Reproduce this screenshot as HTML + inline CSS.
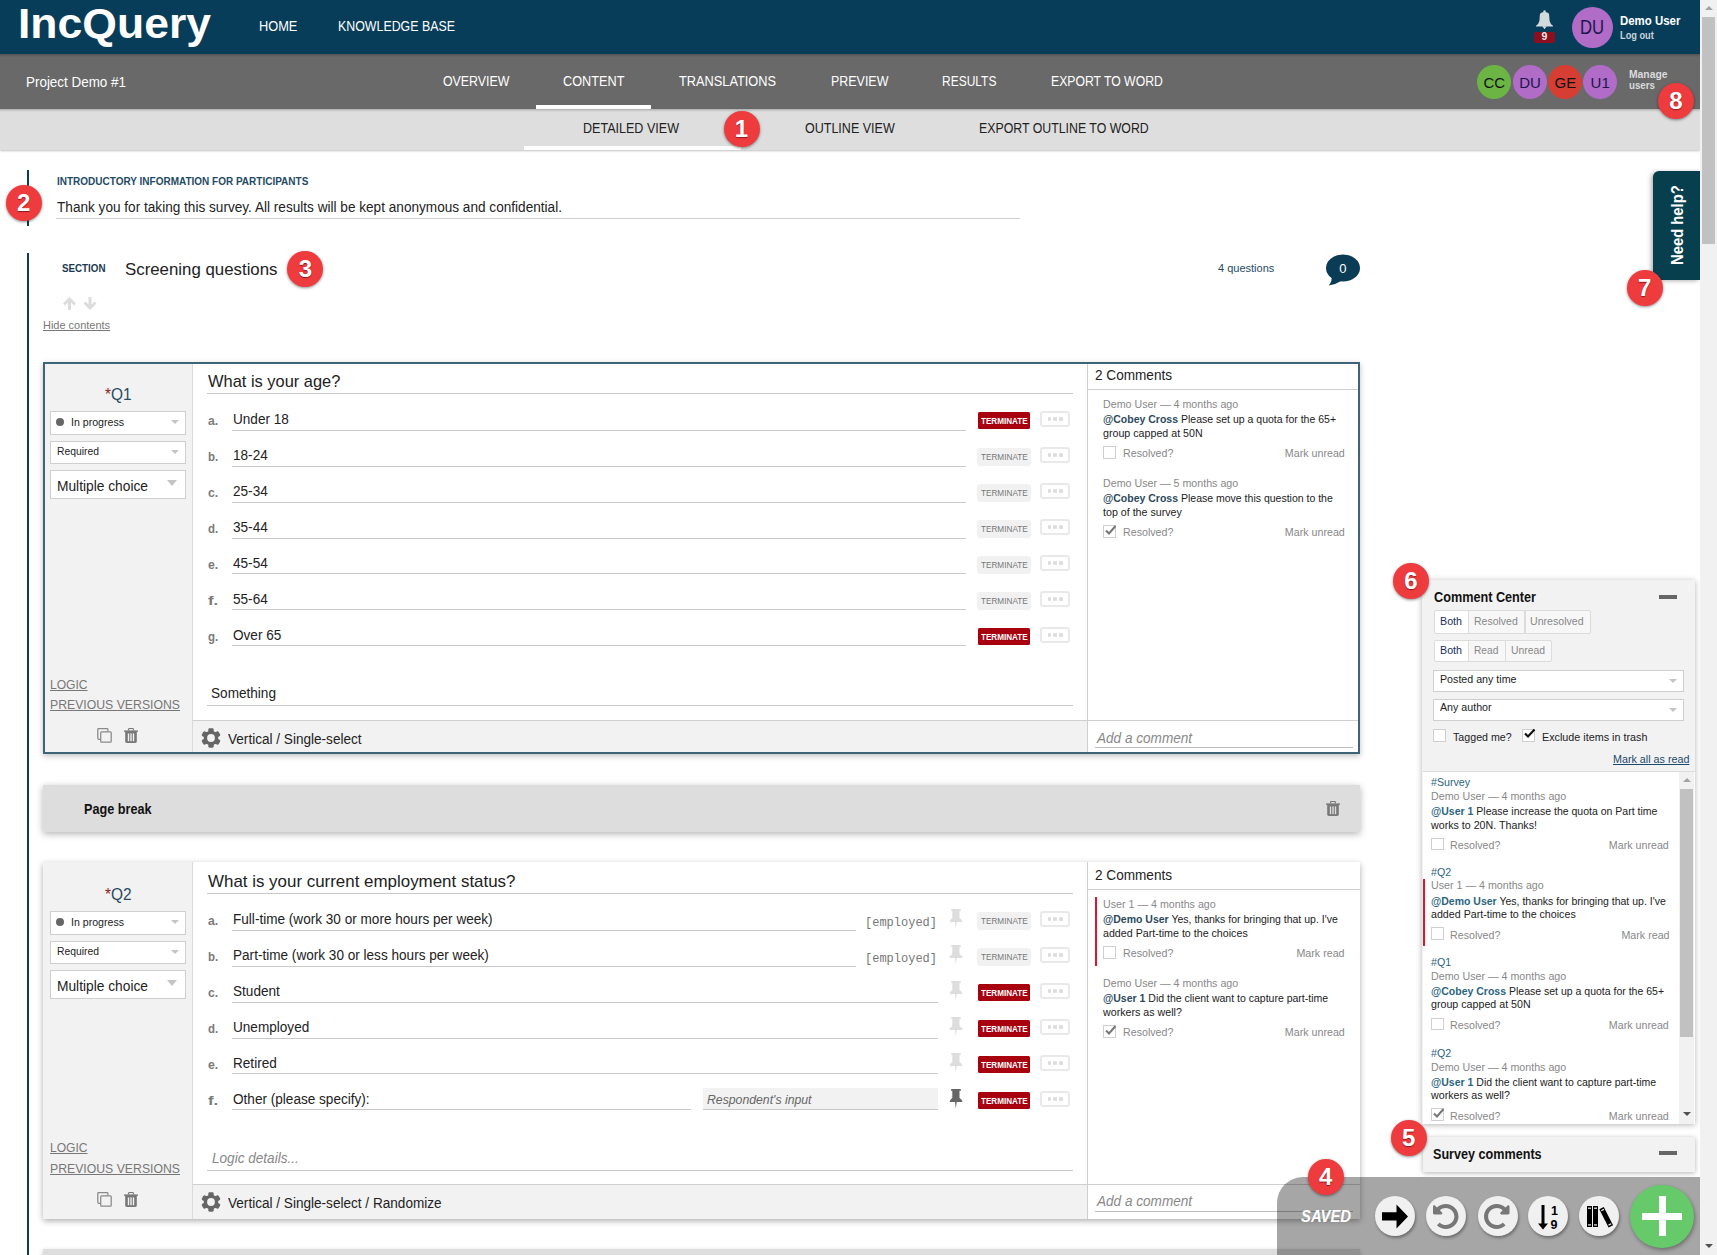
<!DOCTYPE html><html><head><meta charset="utf-8"><style>*{box-sizing:border-box;margin:0;padding:0}
html,body{width:1717px;height:1255px;overflow:hidden;background:#fff;font-family:"Liberation Sans",sans-serif}
.t{position:absolute;white-space:nowrap;line-height:1;transform-origin:0 0}
.r{position:absolute}
.abs{position:absolute}
.badge{position:absolute;width:36px;height:36px;border-radius:50%;background:#ee3b3e;color:#fff;font-size:24px;font-weight:bold;line-height:35.5px;text-align:center;text-shadow:0 1px 1px rgba(60,0,0,.55);box-shadow:0 1px 3px rgba(0,0,0,.45);font-family:"Liberation Sans",sans-serif}
.av{position:absolute;border-radius:50%;text-align:center}
.sel{position:absolute;background:#fff;border:1px solid #cfcfcf}
.arr{position:absolute;width:0;height:0;border-style:solid;border-width:4px 4px 0 4px;border-color:#c4c4c4 transparent transparent transparent;}
.ul{position:absolute;height:1px;background:#c9c9c9}
.term{position:absolute;width:52px;height:17px;border-radius:2px}
.dots{position:absolute;width:30px;height:15.5px;border:2px solid #e9e9e9;border-radius:3px}
.dots i{position:absolute;top:4.2px;width:3.6px;height:3.6px;border-radius:1px;background:#dedede}
.cb{position:absolute;width:13px;height:13px;border:1px solid #cfcfcf;background:#fff}
.tb{position:absolute;width:40px;height:40px;border-radius:50%;background:#f0f0f0;box-shadow:1px 2px 3px rgba(0,0,0,.35)}
</style></head><body><div class="r" style="left:0px;top:0px;width:1700px;height:54px;background:#083d59"></div>
<div id="t1" class="t" style="transform:scaleX(1.0600);left:17.50px;top:2.95px;font-size:42px;color:#fff;font-weight:bold">IncQuery</div>
<div id="t2" class="t" style="transform:scaleX(0.9143);left:258.90px;top:18.85px;font-size:14px;color:#fff;">HOME</div>
<div id="t3" class="t" style="transform:scaleX(0.8846);left:338.30px;top:18.85px;font-size:14px;color:#fff;">KNOWLEDGE BASE</div>
<svg class="abs" style="left:1535px;top:10px" width="19" height="20" viewBox="0 0 19 20"><g fill="#d3dade"><circle cx="9.5" cy="1.4" r="1.2"/><path d="M4.9 4.4 Q5.2 2.2 9.5 2.0 Q13.8 2.2 14.1 4.4 L14.6 11 Q15.2 13.8 18 15.8 V16.4 H1 V15.8 Q3.8 13.8 4.4 11 Z"/><path d="M7.2 16.3 H11.8 L9.5 19.2 Z"/></g></svg>
<div class="r" style="left:1534px;top:32px;width:21px;height:11px;background:#8c0f1f;border-radius:2px"></div>
<div id="t4" class="t" style="transform:scaleX(0.9700);left:1544.50px;top:31.41px;font-size:10.5px;color:#e8e8e8;font-weight:bold;transform:translateX(-50%)">9</div>
<div class="av" style="left:1572px;top:7px;width:41px;height:41px;background:#b06cc6"></div>
<div id="t5" class="t" style="transform:scaleX(0.8555);left:1580.20px;top:17.99px;font-size:19.5px;color:#1b1650;">DU</div>
<div id="t6" class="t" style="transform:scaleX(0.9533);left:1619.60px;top:14.64px;font-size:12px;color:#fff;font-weight:bold">Demo User</div>
<div id="t7" class="t" style="transform:scaleX(0.9221);left:1620.00px;top:30.93px;font-size:10px;color:#c9d3d9;font-weight:bold">Log out</div>
<div class="r" style="left:0px;top:54px;width:1700px;height:55px;background:#696969"></div>
<div class="r" style="left:0px;top:54px;width:1700px;height:3px;background:linear-gradient(rgba(0,0,0,.22),rgba(0,0,0,0))"></div>
<div id="t8" class="t" style="transform:scaleX(0.9259);left:26.20px;top:74.73px;font-size:14.5px;color:#fff;">Project Demo #1</div>
<div id="t9" class="t" style="transform:scaleX(0.8829);left:442.90px;top:74.15px;font-size:14px;color:#fff;">OVERVIEW</div>
<div id="t10" class="t" style="transform:scaleX(0.9073);left:563.20px;top:74.15px;font-size:14px;color:#fff;">CONTENT</div>
<div id="t11" class="t" style="transform:scaleX(0.9124);left:679.40px;top:74.15px;font-size:14px;color:#fff;">TRANSLATIONS</div>
<div id="t12" class="t" style="transform:scaleX(0.8888);left:830.50px;top:74.15px;font-size:14px;color:#fff;">PREVIEW</div>
<div id="t13" class="t" style="transform:scaleX(0.8561);left:942.10px;top:74.15px;font-size:14px;color:#fff;">RESULTS</div>
<div id="t14" class="t" style="transform:scaleX(0.8727);left:1051.20px;top:74.15px;font-size:14px;color:#fff;">EXPORT TO WORD</div>
<div class="r" style="left:536px;top:105px;width:115px;height:4px;background:#fff"></div>
<div class="av" style="left:1477px;top:65px;width:34px;height:34px;background:#6cb544"></div>
<div class="av" style="left:1513px;top:65px;width:34px;height:34px;background:#b06cc6"></div>
<div class="av" style="left:1548.4px;top:65px;width:34px;height:34px;background:#d63d33"></div>
<div class="av" style="left:1583.2px;top:65px;width:34px;height:34px;background:#b06cc6"></div>
<div id="t15" class="t" style="transform:scaleX(0.9700);left:1494.30px;top:75.40px;font-size:15px;color:#111;transform:translateX(-50%)">CC</div>
<div id="t16" class="t" style="transform:scaleX(0.9700);left:1530.00px;top:75.40px;font-size:15px;color:#1b1650;transform:translateX(-50%)">DU</div>
<div id="t17" class="t" style="transform:scaleX(0.9700);left:1565.40px;top:75.40px;font-size:15px;color:#111;transform:translateX(-50%)">GE</div>
<div id="t18" class="t" style="transform:scaleX(0.9700);left:1600.20px;top:75.40px;font-size:15px;color:#1b1650;transform:translateX(-50%)">U1</div>
<div id="t19" class="t" style="transform:scaleX(0.9397);left:1628.50px;top:69.39px;font-size:11px;color:#dcdcdc;font-weight:bold">Manage</div>
<div id="t20" class="t" style="transform:scaleX(0.8856);left:1628.50px;top:79.99px;font-size:11px;color:#dcdcdc;font-weight:bold">users</div>
<div class="r" style="left:0px;top:109px;width:1700px;height:41px;background:#dedede;box-shadow:0 1px 2px rgba(0,0,0,.25)"></div>
<div class="r" style="left:0px;top:109px;width:1700px;height:3px;background:linear-gradient(rgba(0,0,0,.2),rgba(0,0,0,0))"></div>
<div id="t21" class="t" style="transform:scaleX(0.8964);left:583.40px;top:121.45px;font-size:14px;color:#222;">DETAILED VIEW</div>
<div id="t22" class="t" style="transform:scaleX(0.8938);left:805.00px;top:121.45px;font-size:14px;color:#222;">OUTLINE VIEW</div>
<div id="t23" class="t" style="transform:scaleX(0.8808);left:979.30px;top:121.45px;font-size:14px;color:#222;">EXPORT OUTLINE TO WORD</div>
<div class="r" style="left:524px;top:146px;width:217px;height:4px;background:#fff"></div>
<div class="r" style="left:27px;top:170px;width:2px;height:56px;background:#0b3c5d"></div>
<div id="t24" class="t" style="transform:scaleX(0.9085);left:56.70px;top:176.19px;font-size:11px;color:#1f4b64;font-weight:bold">INTRODUCTORY INFORMATION FOR PARTICIPANTS</div>
<div id="t25" class="t" style="transform:scaleX(0.9719);left:57.00px;top:200.45px;font-size:14px;color:#222;">Thank you for taking this survey. All results will be kept anonymous and confidential.</div>
<div class="r" style="left:56px;top:218px;width:964px;height:1px;background:#cfcfcf"></div>
<div class="r" style="left:27px;top:253px;width:2px;height:1002px;background:#0b3c5d"></div>
<div id="t26" class="t" style="transform:scaleX(0.8895);left:61.90px;top:262.99px;font-size:11px;color:#1b3a50;font-weight:bold">SECTION</div>
<div id="t27" class="t" style="transform:scaleX(0.9900);left:124.70px;top:261.11px;font-size:17px;color:#222;">Screening questions</div>
<div id="t28" class="t" style="transform:scaleX(1.0006);left:1218.00px;top:263.19px;font-size:11px;color:#1f4b64;">4 questions</div>
<svg class="abs" style="left:1325px;top:254px" width="36" height="33" viewBox="0 0 36 33"><ellipse cx="18" cy="14" rx="17" ry="13.6" fill="#0b3c56"/><path d="M6.5 21 Q7.5 27.5 3.8 31.4 Q11 30.5 17 26.5 Z" fill="#0b3c56"/></svg>
<div id="t29" class="t" style="left:1339.30px;top:261.50px;font-size:13px;color:#fff;">0</div>
<svg class="abs" style="left:62px;top:296px" width="36" height="15" viewBox="0 0 36 15"><path d="M7.5 1 L1 7.5 L3 9.5 L6 6.5 V14 H9 V6.5 L12 9.5 L14 7.5 Z" fill="#dcdcdc"/><path d="M28 14 L21.5 7.5 L23.5 5.5 L26.5 8.5 V1 H29.5 V8.5 L32.5 5.5 L34.5 7.5 Z" fill="#dcdcdc"/></svg>
<div id="t30" class="t" style="transform:scaleX(0.9975);left:42.90px;top:320.19px;font-size:11px;color:#777;text-decoration:underline">Hide contents</div>
<div class="abs" style="left:43px;top:362px;width:1317px;height:392px;border:2px solid #3f6377;box-shadow:0 2px 6px rgba(0,0,0,.25);background:#fff"></div>
<div class="r" style="left:45px;top:364px;width:147px;height:388px;background:#f2f2f2"></div>
<div class="r" style="left:192px;top:364px;width:1px;height:388px;background:#dadada"></div>
<div class="r" style="left:1087px;top:364px;width:1px;height:388px;background:#cfcfcf"></div>
<div class="r" style="left:193px;top:720px;width:894px;height:32px;background:#f2f2f2"></div>
<div class="r" style="left:193px;top:720px;width:1165px;height:1px;background:#cfcfcf"></div>
<div id="t31" class="t" style="transform:scaleX(0.9645);left:104.60px;top:387.16px;font-size:16px;color:#2b4a5f;"><span style="color:#8b1a2a">*</span>Q1</div>
<div class="sel" style="left:50px;top:411px;width:136px;height:24px"></div>
<div class="abs" style="left:56px;top:418px;width:8px;height:8px;border-radius:50%;background:#666"></div>
<div id="t32" class="t" style="transform:scaleX(0.9631);left:70.50px;top:417.49px;font-size:11px;color:#222;">In progress</div>
<div class="arr" style="left:171px;top:420px"></div>
<div class="sel" style="left:50px;top:441px;width:136px;height:23px"></div>
<div id="t33" class="t" style="transform:scaleX(0.9408);left:56.50px;top:446.19px;font-size:11px;color:#222;">Required</div>
<div class="arr" style="left:171px;top:450px"></div>
<div class="sel" style="left:50px;top:470px;width:136px;height:29px"></div>
<div id="t34" class="t" style="transform:scaleX(0.9826);left:57.00px;top:478.55px;font-size:14px;color:#222;">Multiple choice</div>
<div class="arr" style="left:167px;top:480px;border-width:6px 5.5px 0 5.5px"></div>
<div id="t35" class="t" style="transform:scaleX(0.9266);left:49.90px;top:677.50px;font-size:13px;color:#777;text-decoration:underline">LOGIC</div>
<div id="t36" class="t" style="transform:scaleX(0.9421);left:49.90px;top:697.60px;font-size:13px;color:#777;text-decoration:underline">PREVIOUS VERSIONS</div>
<svg class="abs" style="left:97px;top:728px" width="15" height="15" viewBox="0 0 15 15"><path d="M3.6 11.3 H1.6 Q0.8 11.3 0.8 10.5 V1.4 Q0.8 0.7 1.6 0.7 H10.1 Q10.9 0.7 10.9 1.4 V3.6" fill="none" stroke="#8a8a8a" stroke-width="1.25"/><rect x="3.7" y="3.9" width="10.5" height="10.3" rx="0.9" fill="none" stroke="#8a8a8a" stroke-width="1.25"/></svg>
<svg class="abs" style="left:124px;top:728px" width="14" height="16" viewBox="0 0 14 16"><path d="M4.6 2.6 V1.3 Q4.6 0.5 5.4 0.5 H8.6 Q9.4 0.5 9.4 1.3 V2.6" fill="none" stroke="#777" stroke-width="1.1"/><rect x="0.1" y="2.4" width="13.8" height="1.5" fill="#777"/><path d="M1.2 3.5 H12.8 V13.2 Q12.8 14.9 11.1 14.9 H2.9 Q1.2 14.9 1.2 13.2 Z" fill="#777"/><rect x="3.8" y="5.4" width="1.4" height="7.8" fill="#f2f2f2"/><rect x="6.3" y="5.4" width="1.4" height="7.8" fill="#f2f2f2"/><rect x="8.8" y="5.4" width="1.4" height="7.8" fill="#f2f2f2"/></svg>
<div id="t37" class="t" style="transform:scaleX(0.9663);left:207.60px;top:372.91px;font-size:17px;color:#222;">What is your age?</div>
<div class="r" style="left:207px;top:393px;width:866px;height:1px;background:#c9c9c9"></div>
<div id="t38" class="t" style="transform:scaleX(0.8992);left:208.00px;top:413.79px;font-size:13.6px;color:#7a7a7a;font-weight:bold">a.</div>
<div id="t39" class="t" style="transform:scaleX(0.9700);left:232.60px;top:412.45px;font-size:14px;color:#222;">Under 18</div>
<div class="r" style="left:232px;top:430px;width:734px;height:1px;background:#c9c9c9"></div>
<div class="term" style="left:978px;top:412.0px;background:#a8000f;border-radius:1.5px"></div>
<div id="t40" class="t" style="transform:scaleX(0.8535);left:981.00px;top:415.66px;font-size:9.5px;color:#fff;font-weight:bold">TERMINATE</div>
<div class="dots" style="left:1040px;top:411.2px"><i style="left:5.5px"></i><i style="left:11.2px"></i><i style="left:17px"></i></div>
<div id="t41" class="t" style="transform:scaleX(0.8434);left:208.00px;top:449.79px;font-size:13.6px;color:#7a7a7a;font-weight:bold">b.</div>
<div id="t42" class="t" style="transform:scaleX(0.9700);left:232.60px;top:448.45px;font-size:14px;color:#222;">18-24</div>
<div class="r" style="left:232px;top:466px;width:734px;height:1px;background:#c9c9c9"></div>
<div class="term" style="left:977px;top:448.0px;width:54px;height:18px;background:#f1f1f1;border-radius:3px"></div>
<div id="t43" class="t" style="transform:scaleX(0.8618);left:981.00px;top:452.06px;font-size:9.5px;color:#777;">TERMINATE</div>
<div class="dots" style="left:1040px;top:447.2px"><i style="left:5.5px"></i><i style="left:11.2px"></i><i style="left:17px"></i></div>
<div id="t44" class="t" style="transform:scaleX(0.8992);left:208.00px;top:485.79px;font-size:13.6px;color:#7a7a7a;font-weight:bold">c.</div>
<div id="t45" class="t" style="transform:scaleX(0.9700);left:232.60px;top:484.45px;font-size:14px;color:#222;">25-34</div>
<div class="r" style="left:232px;top:502px;width:734px;height:1px;background:#c9c9c9"></div>
<div class="term" style="left:977px;top:484.0px;width:54px;height:18px;background:#f1f1f1;border-radius:3px"></div>
<div id="t46" class="t" style="transform:scaleX(0.8618);left:981.00px;top:488.06px;font-size:9.5px;color:#777;">TERMINATE</div>
<div class="dots" style="left:1040px;top:483.2px"><i style="left:5.5px"></i><i style="left:11.2px"></i><i style="left:17px"></i></div>
<div id="t47" class="t" style="transform:scaleX(0.8434);left:208.00px;top:521.79px;font-size:13.6px;color:#7a7a7a;font-weight:bold">d.</div>
<div id="t48" class="t" style="transform:scaleX(0.9700);left:232.60px;top:520.45px;font-size:14px;color:#222;">35-44</div>
<div class="r" style="left:232px;top:538px;width:734px;height:1px;background:#c9c9c9"></div>
<div class="term" style="left:977px;top:520.0px;width:54px;height:18px;background:#f1f1f1;border-radius:3px"></div>
<div id="t49" class="t" style="transform:scaleX(0.8618);left:981.00px;top:524.06px;font-size:9.5px;color:#777;">TERMINATE</div>
<div class="dots" style="left:1040px;top:519.1999999999999px"><i style="left:5.5px"></i><i style="left:11.2px"></i><i style="left:17px"></i></div>
<div id="t50" class="t" style="transform:scaleX(0.8992);left:208.00px;top:557.79px;font-size:13.6px;color:#7a7a7a;font-weight:bold">e.</div>
<div id="t51" class="t" style="transform:scaleX(0.9700);left:232.60px;top:556.45px;font-size:14px;color:#222;">45-54</div>
<div class="r" style="left:232px;top:573px;width:734px;height:1px;background:#c9c9c9"></div>
<div class="term" style="left:977px;top:556.0px;width:54px;height:18px;background:#f1f1f1;border-radius:3px"></div>
<div id="t52" class="t" style="transform:scaleX(0.8618);left:981.00px;top:560.06px;font-size:9.5px;color:#777;">TERMINATE</div>
<div class="dots" style="left:1040px;top:555.1999999999999px"><i style="left:5.5px"></i><i style="left:11.2px"></i><i style="left:17px"></i></div>
<div id="t53" class="t" style="transform:scaleX(1.2271);left:208.00px;top:593.79px;font-size:13.6px;color:#7a7a7a;font-weight:bold">f.</div>
<div id="t54" class="t" style="transform:scaleX(0.9700);left:232.60px;top:592.45px;font-size:14px;color:#222;">55-64</div>
<div class="r" style="left:232px;top:609px;width:734px;height:1px;background:#c9c9c9"></div>
<div class="term" style="left:977px;top:592.0px;width:54px;height:18px;background:#f1f1f1;border-radius:3px"></div>
<div id="t55" class="t" style="transform:scaleX(0.8618);left:981.00px;top:596.06px;font-size:9.5px;color:#777;">TERMINATE</div>
<div class="dots" style="left:1040px;top:591.1999999999999px"><i style="left:5.5px"></i><i style="left:11.2px"></i><i style="left:17px"></i></div>
<div id="t56" class="t" style="transform:scaleX(0.8434);left:208.00px;top:629.79px;font-size:13.6px;color:#7a7a7a;font-weight:bold">g.</div>
<div id="t57" class="t" style="transform:scaleX(0.9700);left:232.60px;top:628.45px;font-size:14px;color:#222;">Over 65</div>
<div class="r" style="left:232px;top:645px;width:734px;height:1px;background:#c9c9c9"></div>
<div class="term" style="left:978px;top:628.0px;background:#a8000f;border-radius:1.5px"></div>
<div id="t58" class="t" style="transform:scaleX(0.8535);left:981.00px;top:631.66px;font-size:9.5px;color:#fff;font-weight:bold">TERMINATE</div>
<div class="dots" style="left:1040px;top:627.1999999999999px"><i style="left:5.5px"></i><i style="left:11.2px"></i><i style="left:17px"></i></div>
<div id="t59" class="t" style="transform:scaleX(0.9711);left:210.60px;top:685.65px;font-size:14px;color:#222;">Something</div>
<div class="r" style="left:207px;top:705px;width:866px;height:1px;background:#c9c9c9"></div>
<svg class="abs" style="left:201px;top:728px" width="20" height="20" viewBox="0 0 20 20"><g transform="translate(10 10)" fill="#666"><circle r="7.3"/><rect x="-2.7" y="-9.7" width="5.4" height="5" rx="1.4" transform="rotate(0)"/><rect x="-2.7" y="-9.7" width="5.4" height="5" rx="1.4" transform="rotate(60)"/><rect x="-2.7" y="-9.7" width="5.4" height="5" rx="1.4" transform="rotate(120)"/><rect x="-2.7" y="-9.7" width="5.4" height="5" rx="1.4" transform="rotate(180)"/><rect x="-2.7" y="-9.7" width="5.4" height="5" rx="1.4" transform="rotate(240)"/><rect x="-2.7" y="-9.7" width="5.4" height="5" rx="1.4" transform="rotate(300)"/><circle r="3.9" fill="#f2f2f2"/></g></svg>
<div id="t60" class="t" style="transform:scaleX(0.9700);left:228.00px;top:731.65px;font-size:14px;color:#222;">Vertical / Single-select</div>
<div id="t61" class="t" style="transform:scaleX(0.9703);left:1095.10px;top:368.25px;font-size:14px;color:#222;">2 Comments</div>
<div class="r" style="left:1088px;top:389px;width:1270px;height:0px;"></div>
<div class="r" style="left:1088px;top:389px;width:270px;height:1px;background:#cfcfcf"></div>
<div id="t62" class="t" style="transform:scaleX(0.9700);left:1103.30px;top:399.19px;font-size:11px;color:#888;">Demo User — 4 months ago</div>
<div id="t63" class="t" style="transform:scaleX(0.9550);left:1103.30px;top:414.39px;font-size:11px;color:#222;"><b style="color:#2b4a5e">@Cobey Cross</b> Please set up a quota for the 65+</div>
<div id="t64" class="t" style="transform:scaleX(0.9700);left:1103.30px;top:427.99px;font-size:11px;color:#222;">group capped at 50N</div>
<div class="cb" style="left:1103.3px;top:446.0px;width:13px;height:12.5px"></div>
<div id="t65" class="t" style="transform:scaleX(0.9700);left:1122.50px;top:448.29px;font-size:11px;color:#888;">Resolved?</div>
<div id="t66" class="t" style="transform:scaleX(0.9700);transform-origin:100% 0;right:372.00px;top:448.29px;font-size:11px;color:#888;">Mark unread</div>
<div id="t67" class="t" style="transform:scaleX(0.9700);left:1103.30px;top:478.19px;font-size:11px;color:#888;">Demo User — 5 months ago</div>
<div id="t68" class="t" style="transform:scaleX(0.9550);left:1103.30px;top:493.39px;font-size:11px;color:#222;"><b style="color:#2b4a5e">@Cobey Cross</b> Please move this question to the</div>
<div id="t69" class="t" style="transform:scaleX(0.9700);left:1103.30px;top:506.99px;font-size:11px;color:#222;">top of the survey</div>
<div class="cb" style="left:1103.3px;top:525.0px;width:13px;height:12.5px"></div>
<svg class="abs" style="left:1104.3px;top:524.0px" width="13" height="13" viewBox="0 0 13 13"><path d="M2 6.5 L5 9.5 L11.5 2" fill="none" stroke="#777" stroke-width="2"/></svg>
<div id="t70" class="t" style="transform:scaleX(0.9700);left:1122.50px;top:527.29px;font-size:11px;color:#888;">Resolved?</div>
<div id="t71" class="t" style="transform:scaleX(0.9700);transform-origin:100% 0;right:372.00px;top:527.29px;font-size:11px;color:#888;">Mark unread</div>
<div id="t72" class="t" style="transform:scaleX(0.9700);left:1097.00px;top:730.65px;font-size:14px;color:#888;font-style:italic">Add a comment</div>
<div class="r" style="left:1095px;top:747px;width:258px;height:1px;background:#bdbdbd"></div>
<div class="r" style="left:43px;top:785px;width:1317px;height:47px;background:#dddddd;box-shadow:0 2px 7px rgba(0,0,0,.3)"></div>
<div id="t73" class="t" style="transform:scaleX(0.9034);left:83.80px;top:801.55px;font-size:14px;color:#111;font-weight:bold">Page break</div>
<svg class="abs" style="left:1326px;top:801px" width="14" height="16" viewBox="0 0 14 16"><path d="M4.6 2.6 V1.3 Q4.6 0.5 5.4 0.5 H8.6 Q9.4 0.5 9.4 1.3 V2.6" fill="none" stroke="#777" stroke-width="1.1"/><rect x="0.1" y="2.4" width="13.8" height="1.5" fill="#777"/><path d="M1.2 3.5 H12.8 V13.2 Q12.8 14.9 11.1 14.9 H2.9 Q1.2 14.9 1.2 13.2 Z" fill="#777"/><rect x="3.8" y="5.4" width="1.4" height="7.8" fill="#dddddd"/><rect x="6.3" y="5.4" width="1.4" height="7.8" fill="#dddddd"/><rect x="8.8" y="5.4" width="1.4" height="7.8" fill="#dddddd"/></svg>
<div class="abs" style="left:43px;top:862px;width:1317px;height:357px;box-shadow:0 2px 6px rgba(0,0,0,.32);background:#fff"></div>
<div class="r" style="left:43px;top:862px;width:149px;height:357px;background:#f2f2f2"></div>
<div class="r" style="left:192px;top:862px;width:1px;height:357px;background:#dadada"></div>
<div class="r" style="left:1087px;top:862px;width:1px;height:357px;background:#cfcfcf"></div>
<div class="r" style="left:193px;top:1184px;width:894px;height:35px;background:#f2f2f2"></div>
<div class="r" style="left:193px;top:1184px;width:1167px;height:1px;background:#cfcfcf"></div>
<div id="t74" class="t" style="transform:scaleX(0.9645);left:104.60px;top:887.16px;font-size:16px;color:#2b4a5f;"><span style="color:#8b1a2a">*</span>Q2</div>
<div class="sel" style="left:50px;top:911px;width:136px;height:24px"></div>
<div class="abs" style="left:56px;top:918px;width:8px;height:8px;border-radius:50%;background:#666"></div>
<div id="t75" class="t" style="transform:scaleX(0.9631);left:70.50px;top:917.49px;font-size:11px;color:#222;">In progress</div>
<div class="arr" style="left:171px;top:920px"></div>
<div class="sel" style="left:50px;top:941px;width:136px;height:23px"></div>
<div id="t76" class="t" style="transform:scaleX(0.9408);left:56.50px;top:946.19px;font-size:11px;color:#222;">Required</div>
<div class="arr" style="left:171px;top:950px"></div>
<div class="sel" style="left:50px;top:970px;width:136px;height:29px"></div>
<div id="t77" class="t" style="transform:scaleX(0.9826);left:57.00px;top:978.55px;font-size:14px;color:#222;">Multiple choice</div>
<div class="arr" style="left:167px;top:980px;border-width:6px 5.5px 0 5.5px"></div>
<div id="t78" class="t" style="transform:scaleX(0.9266);left:49.90px;top:1141.40px;font-size:13px;color:#777;text-decoration:underline">LOGIC</div>
<div id="t79" class="t" style="transform:scaleX(0.9421);left:49.90px;top:1161.50px;font-size:13px;color:#777;text-decoration:underline">PREVIOUS VERSIONS</div>
<svg class="abs" style="left:97px;top:1192px" width="15" height="15" viewBox="0 0 15 15"><path d="M3.6 11.3 H1.6 Q0.8 11.3 0.8 10.5 V1.4 Q0.8 0.7 1.6 0.7 H10.1 Q10.9 0.7 10.9 1.4 V3.6" fill="none" stroke="#8a8a8a" stroke-width="1.25"/><rect x="3.7" y="3.9" width="10.5" height="10.3" rx="0.9" fill="none" stroke="#8a8a8a" stroke-width="1.25"/></svg>
<svg class="abs" style="left:124px;top:1192px" width="14" height="16" viewBox="0 0 14 16"><path d="M4.6 2.6 V1.3 Q4.6 0.5 5.4 0.5 H8.6 Q9.4 0.5 9.4 1.3 V2.6" fill="none" stroke="#777" stroke-width="1.1"/><rect x="0.1" y="2.4" width="13.8" height="1.5" fill="#777"/><path d="M1.2 3.5 H12.8 V13.2 Q12.8 14.9 11.1 14.9 H2.9 Q1.2 14.9 1.2 13.2 Z" fill="#777"/><rect x="3.8" y="5.4" width="1.4" height="7.8" fill="#f2f2f2"/><rect x="6.3" y="5.4" width="1.4" height="7.8" fill="#f2f2f2"/><rect x="8.8" y="5.4" width="1.4" height="7.8" fill="#f2f2f2"/></svg>
<div id="t80" class="t" style="transform:scaleX(0.9952);left:207.60px;top:872.91px;font-size:17px;color:#222;">What is your current employment status?</div>
<div class="r" style="left:207px;top:893px;width:866px;height:1px;background:#c9c9c9"></div>
<div id="t81" class="t" style="transform:scaleX(0.8992);left:208.00px;top:913.79px;font-size:13.6px;color:#7a7a7a;font-weight:bold">a.</div>
<div id="t82" class="t" style="transform:scaleX(0.9700);left:232.60px;top:912.45px;font-size:14px;color:#222;">Full-time (work 30 or more hours per week)</div>
<div class="r" style="left:232px;top:930px;width:624px;height:1px;background:#c9c9c9"></div>
<div id="t83" class="t" style="transform:scaleX(0.9229);left:864.80px;top:915.70px;font-size:13px;color:#777;font-family:'Liberation Mono',monospace">[employed]</div>
<svg class="abs" style="left:949px;top:908.9px" width="14" height="20" viewBox="0 0 14 20"><path d="M2.6 0 H11.3 Q12 0 12 0.9 Q12 1.8 11.3 1.8 H10.5 V9.1 Q12.8 10.3 13.6 12.9 H7.7 L6.8 19.6 L6 12.9 H0.5 Q1.3 10.3 3.3 9.1 V1.8 H2.6 Q1.9 1.8 1.9 0.9 Q1.9 0 2.6 0 Z" fill="#dddddd"/></svg>
<div class="term" style="left:977px;top:912.0px;width:54px;height:18px;background:#f1f1f1;border-radius:3px"></div>
<div id="t84" class="t" style="transform:scaleX(0.8618);left:981.00px;top:916.06px;font-size:9.5px;color:#777;">TERMINATE</div>
<div class="dots" style="left:1040px;top:911.1999999999999px"><i style="left:5.5px"></i><i style="left:11.2px"></i><i style="left:17px"></i></div>
<div id="t85" class="t" style="transform:scaleX(0.8434);left:208.00px;top:949.79px;font-size:13.6px;color:#7a7a7a;font-weight:bold">b.</div>
<div id="t86" class="t" style="transform:scaleX(0.9700);left:232.60px;top:948.45px;font-size:14px;color:#222;">Part-time (work 30 or less hours per week)</div>
<div class="r" style="left:232px;top:966px;width:624px;height:1px;background:#c9c9c9"></div>
<div id="t87" class="t" style="transform:scaleX(0.9229);left:864.80px;top:951.70px;font-size:13px;color:#777;font-family:'Liberation Mono',monospace">[employed]</div>
<svg class="abs" style="left:949px;top:944.9px" width="14" height="20" viewBox="0 0 14 20"><path d="M2.6 0 H11.3 Q12 0 12 0.9 Q12 1.8 11.3 1.8 H10.5 V9.1 Q12.8 10.3 13.6 12.9 H7.7 L6.8 19.6 L6 12.9 H0.5 Q1.3 10.3 3.3 9.1 V1.8 H2.6 Q1.9 1.8 1.9 0.9 Q1.9 0 2.6 0 Z" fill="#dddddd"/></svg>
<div class="term" style="left:977px;top:948.0px;width:54px;height:18px;background:#f1f1f1;border-radius:3px"></div>
<div id="t88" class="t" style="transform:scaleX(0.8618);left:981.00px;top:952.06px;font-size:9.5px;color:#777;">TERMINATE</div>
<div class="dots" style="left:1040px;top:947.1999999999999px"><i style="left:5.5px"></i><i style="left:11.2px"></i><i style="left:17px"></i></div>
<div id="t89" class="t" style="transform:scaleX(0.8992);left:208.00px;top:985.79px;font-size:13.6px;color:#7a7a7a;font-weight:bold">c.</div>
<div id="t90" class="t" style="transform:scaleX(0.9700);left:232.60px;top:984.45px;font-size:14px;color:#222;">Student</div>
<div class="r" style="left:232px;top:1002px;width:706px;height:1px;background:#c9c9c9"></div>
<svg class="abs" style="left:949px;top:980.9px" width="14" height="20" viewBox="0 0 14 20"><path d="M2.6 0 H11.3 Q12 0 12 0.9 Q12 1.8 11.3 1.8 H10.5 V9.1 Q12.8 10.3 13.6 12.9 H7.7 L6.8 19.6 L6 12.9 H0.5 Q1.3 10.3 3.3 9.1 V1.8 H2.6 Q1.9 1.8 1.9 0.9 Q1.9 0 2.6 0 Z" fill="#dddddd"/></svg>
<div class="term" style="left:978px;top:984.0px;background:#a8000f;border-radius:1.5px"></div>
<div id="t91" class="t" style="transform:scaleX(0.8535);left:981.00px;top:987.66px;font-size:9.5px;color:#fff;font-weight:bold">TERMINATE</div>
<div class="dots" style="left:1040px;top:983.1999999999999px"><i style="left:5.5px"></i><i style="left:11.2px"></i><i style="left:17px"></i></div>
<div id="t92" class="t" style="transform:scaleX(0.8434);left:208.00px;top:1021.79px;font-size:13.6px;color:#7a7a7a;font-weight:bold">d.</div>
<div id="t93" class="t" style="transform:scaleX(0.9700);left:232.60px;top:1020.45px;font-size:14px;color:#222;">Unemployed</div>
<div class="r" style="left:232px;top:1038px;width:706px;height:1px;background:#c9c9c9"></div>
<svg class="abs" style="left:949px;top:1016.9px" width="14" height="20" viewBox="0 0 14 20"><path d="M2.6 0 H11.3 Q12 0 12 0.9 Q12 1.8 11.3 1.8 H10.5 V9.1 Q12.8 10.3 13.6 12.9 H7.7 L6.8 19.6 L6 12.9 H0.5 Q1.3 10.3 3.3 9.1 V1.8 H2.6 Q1.9 1.8 1.9 0.9 Q1.9 0 2.6 0 Z" fill="#dddddd"/></svg>
<div class="term" style="left:978px;top:1020.0px;background:#a8000f;border-radius:1.5px"></div>
<div id="t94" class="t" style="transform:scaleX(0.8535);left:981.00px;top:1023.66px;font-size:9.5px;color:#fff;font-weight:bold">TERMINATE</div>
<div class="dots" style="left:1040px;top:1019.1999999999999px"><i style="left:5.5px"></i><i style="left:11.2px"></i><i style="left:17px"></i></div>
<div id="t95" class="t" style="transform:scaleX(0.8992);left:208.00px;top:1057.79px;font-size:13.6px;color:#7a7a7a;font-weight:bold">e.</div>
<div id="t96" class="t" style="transform:scaleX(0.9700);left:232.60px;top:1056.45px;font-size:14px;color:#222;">Retired</div>
<div class="r" style="left:232px;top:1073px;width:706px;height:1px;background:#c9c9c9"></div>
<svg class="abs" style="left:949px;top:1052.9px" width="14" height="20" viewBox="0 0 14 20"><path d="M2.6 0 H11.3 Q12 0 12 0.9 Q12 1.8 11.3 1.8 H10.5 V9.1 Q12.8 10.3 13.6 12.9 H7.7 L6.8 19.6 L6 12.9 H0.5 Q1.3 10.3 3.3 9.1 V1.8 H2.6 Q1.9 1.8 1.9 0.9 Q1.9 0 2.6 0 Z" fill="#dddddd"/></svg>
<div class="term" style="left:978px;top:1056.0px;background:#a8000f;border-radius:1.5px"></div>
<div id="t97" class="t" style="transform:scaleX(0.8535);left:981.00px;top:1059.66px;font-size:9.5px;color:#fff;font-weight:bold">TERMINATE</div>
<div class="dots" style="left:1040px;top:1055.2px"><i style="left:5.5px"></i><i style="left:11.2px"></i><i style="left:17px"></i></div>
<div id="t98" class="t" style="transform:scaleX(1.2271);left:208.00px;top:1093.79px;font-size:13.6px;color:#7a7a7a;font-weight:bold">f.</div>
<div id="t99" class="t" style="transform:scaleX(0.9700);left:232.60px;top:1092.45px;font-size:14px;color:#222;">Other (please specify):</div>
<div class="r" style="left:232px;top:1109px;width:459px;height:1px;background:#c9c9c9"></div>
<div class="r" style="left:703px;top:1088px;width:235px;height:22px;background:#f2f2f2;border-bottom:1px solid #c9c9c9"></div>
<div id="t100" class="t" style="transform:scaleX(0.9422);left:707.00px;top:1093.00px;font-size:13px;color:#666;font-style:italic">Respondent's input</div>
<svg class="abs" style="left:949px;top:1088.9px" width="14" height="20" viewBox="0 0 14 20"><path d="M2.6 0 H11.3 Q12 0 12 0.9 Q12 1.8 11.3 1.8 H10.5 V9.1 Q12.8 10.3 13.6 12.9 H7.7 L6.8 19.6 L6 12.9 H0.5 Q1.3 10.3 3.3 9.1 V1.8 H2.6 Q1.9 1.8 1.9 0.9 Q1.9 0 2.6 0 Z" fill="#666"/></svg>
<div class="term" style="left:978px;top:1092.0px;background:#a8000f;border-radius:1.5px"></div>
<div id="t101" class="t" style="transform:scaleX(0.8535);left:981.00px;top:1095.66px;font-size:9.5px;color:#fff;font-weight:bold">TERMINATE</div>
<div class="dots" style="left:1040px;top:1091.2px"><i style="left:5.5px"></i><i style="left:11.2px"></i><i style="left:17px"></i></div>
<div id="t102" class="t" style="transform:scaleX(0.9700);left:211.50px;top:1150.65px;font-size:14px;color:#888;font-style:italic">Logic details...</div>
<div class="r" style="left:207px;top:1170px;width:866px;height:1px;background:#c9c9c9"></div>
<svg class="abs" style="left:201px;top:1192px" width="20" height="20" viewBox="0 0 20 20"><g transform="translate(10 10)" fill="#666"><circle r="7.3"/><rect x="-2.7" y="-9.7" width="5.4" height="5" rx="1.4" transform="rotate(0)"/><rect x="-2.7" y="-9.7" width="5.4" height="5" rx="1.4" transform="rotate(60)"/><rect x="-2.7" y="-9.7" width="5.4" height="5" rx="1.4" transform="rotate(120)"/><rect x="-2.7" y="-9.7" width="5.4" height="5" rx="1.4" transform="rotate(180)"/><rect x="-2.7" y="-9.7" width="5.4" height="5" rx="1.4" transform="rotate(240)"/><rect x="-2.7" y="-9.7" width="5.4" height="5" rx="1.4" transform="rotate(300)"/><circle r="3.9" fill="#f2f2f2"/></g></svg>
<div id="t103" class="t" style="transform:scaleX(0.9700);left:228.00px;top:1195.65px;font-size:14px;color:#222;">Vertical / Single-select / Randomize</div>
<div id="t104" class="t" style="transform:scaleX(0.9703);left:1095.10px;top:868.25px;font-size:14px;color:#222;">2 Comments</div>
<div class="r" style="left:1088px;top:889px;width:272px;height:1px;background:#cfcfcf"></div>
<div class="r" style="left:1095px;top:897px;width:2px;height:69px;background:#e8112d"></div>
<div id="t105" class="t" style="transform:scaleX(0.9700);left:1103.30px;top:899.19px;font-size:11px;color:#888;">User 1 — 4 months ago</div>
<div id="t106" class="t" style="transform:scaleX(0.9550);left:1103.30px;top:914.39px;font-size:11px;color:#222;"><b style="color:#2b4a5e">@Demo User</b> Yes, thanks for bringing that up. I've</div>
<div id="t107" class="t" style="transform:scaleX(0.9700);left:1103.30px;top:927.99px;font-size:11px;color:#222;">added Part-time to the choices</div>
<div class="cb" style="left:1103.3px;top:946.0px;width:13px;height:12.5px"></div>
<div id="t108" class="t" style="transform:scaleX(0.9700);left:1122.50px;top:948.29px;font-size:11px;color:#888;">Resolved?</div>
<div id="t109" class="t" style="transform:scaleX(0.9700);transform-origin:100% 0;right:372.00px;top:948.29px;font-size:11px;color:#888;">Mark read</div>
<div id="t110" class="t" style="transform:scaleX(0.9700);left:1103.30px;top:978.19px;font-size:11px;color:#888;">Demo User — 4 months ago</div>
<div id="t111" class="t" style="transform:scaleX(0.9550);left:1103.30px;top:993.39px;font-size:11px;color:#222;"><b style="color:#2b4a5e">@User 1</b> Did the client want to capture part-time</div>
<div id="t112" class="t" style="transform:scaleX(0.9700);left:1103.30px;top:1006.99px;font-size:11px;color:#222;">workers as well?</div>
<div class="cb" style="left:1103.3px;top:1025.0px;width:13px;height:12.5px"></div>
<svg class="abs" style="left:1104.3px;top:1024.0px" width="13" height="13" viewBox="0 0 13 13"><path d="M2 6.5 L5 9.5 L11.5 2" fill="none" stroke="#777" stroke-width="2"/></svg>
<div id="t113" class="t" style="transform:scaleX(0.9700);left:1122.50px;top:1027.29px;font-size:11px;color:#888;">Resolved?</div>
<div id="t114" class="t" style="transform:scaleX(0.9700);transform-origin:100% 0;right:372.00px;top:1027.29px;font-size:11px;color:#888;">Mark unread</div>
<div id="t115" class="t" style="transform:scaleX(0.9700);left:1097.00px;top:1194.15px;font-size:14px;color:#888;font-style:italic">Add a comment</div>
<div class="r" style="left:1095px;top:1211px;width:258px;height:1px;background:#bdbdbd"></div>
<div class="r" style="left:43px;top:1249px;width:1317px;height:10px;background:#dddddd;box-shadow:0 2px 5px rgba(0,0,0,.25)"></div>
<div class="abs" style="left:1653px;top:171px;width:47px;height:109px;background:#083f4f;border-radius:6px 0 0 0;box-shadow:-2px 1px 4px rgba(0,0,0,.3)"></div>
<div class="abs" style="left:1653px;top:171px;width:47px;height:109px;overflow:hidden"><div class="t" style="left:16.8px;top:94px;font-size:16px;font-weight:bold;color:#fff;transform:rotate(-90deg) scaleX(0.925);transform-origin:0 0;line-height:1">Need help?</div></div>
<div class="abs" style="left:1422px;top:580px;width:273px;height:544px;background:#f2f2f2;box-shadow:0 1px 6px rgba(0,0,0,.3)"></div>
<div id="t116" class="t" style="transform:scaleX(0.9043);left:1433.80px;top:589.75px;font-size:14px;color:#111;font-weight:bold">Comment Center</div>
<div class="r" style="left:1659px;top:595px;width:18px;height:4px;background:#666"></div>
<div class="abs" style="left:1433.6px;top:610.4px;width:35.8px;height:23.3px;background:#fff;border:1px solid #dcdcdc;border-radius:2px 0 0 2px"></div>
<div id="t117" class="t" style="transform:scaleX(0.9717);left:1440.40px;top:615.99px;font-size:11px;color:#1b2d5a;">Both</div>
<div class="abs" style="left:1468.4px;top:610.4px;width:57.1px;height:23.3px;background:#f7f7f7;border:1px solid #dcdcdc;"></div>
<div id="t118" class="t" style="transform:scaleX(0.9551);left:1474.40px;top:615.99px;font-size:11px;color:#888;">Resolved</div>
<div class="abs" style="left:1524.5px;top:610.4px;width:66.9px;height:23.3px;background:#f7f7f7;border:1px solid #dcdcdc;border-radius:0 2px 2px 0"></div>
<div id="t119" class="t" style="transform:scaleX(0.9633);left:1530.40px;top:615.99px;font-size:11px;color:#888;">Unresolved</div>
<div class="abs" style="left:1433.6px;top:640.4px;width:35.8px;height:22px;background:#fff;border:1px solid #dcdcdc;border-radius:2px 0 0 2px"></div>
<div id="t120" class="t" style="transform:scaleX(0.9717);left:1440.40px;top:644.99px;font-size:11px;color:#1b2d5a;">Both</div>
<div class="abs" style="left:1468.4px;top:640.4px;width:37.2px;height:22px;background:#f7f7f7;border:1px solid #dcdcdc;"></div>
<div id="t121" class="t" style="transform:scaleX(0.9279);left:1474.40px;top:644.99px;font-size:11px;color:#888;">Read</div>
<div class="abs" style="left:1504.6px;top:640.4px;width:47.8px;height:22px;background:#f7f7f7;border:1px solid #dcdcdc;border-radius:0 2px 2px 0"></div>
<div id="t122" class="t" style="transform:scaleX(0.9424);left:1511.00px;top:644.99px;font-size:11px;color:#888;">Unread</div>
<div class="sel" style="left:1433px;top:669.6px;width:251px;height:22.5px"></div>
<div id="t123" class="t" style="transform:scaleX(0.9700);left:1440.20px;top:673.59px;font-size:11px;color:#222;">Posted any time</div>
<div class="arr" style="left:1669px;top:678.6px"></div>
<div class="sel" style="left:1433px;top:698.5px;width:251px;height:22.5px"></div>
<div id="t124" class="t" style="transform:scaleX(0.9700);left:1440.20px;top:702.49px;font-size:11px;color:#222;">Any author</div>
<div class="arr" style="left:1669px;top:707.5px"></div>
<div class="cb" style="left:1433px;top:729.4px;width:12.5px;height:12.5px"></div>
<div id="t125" class="t" style="transform:scaleX(0.9700);left:1453.20px;top:731.69px;font-size:11px;color:#222;">Tagged me?</div>
<div class="cb" style="left:1522.4px;top:729.4px;width:12.5px;height:12.5px"></div>
<svg class="abs" style="left:1523px;top:727px" width="13" height="13" viewBox="0 0 13 13"><path d="M2 6.5 L5 9.5 L11.5 2.5" fill="none" stroke="#111" stroke-width="2.2"/></svg>
<div id="t126" class="t" style="transform:scaleX(0.9795);left:1541.60px;top:731.69px;font-size:11px;color:#222;">Exclude items in trash</div>
<div id="t127" class="t" style="transform:scaleX(0.9762);left:1612.50px;top:754.09px;font-size:11px;color:#1b4a6b;text-decoration:underline">Mark all as read</div>
<div class="r" style="left:1423px;top:771px;width:272px;height:353px;background:#fff;border-top:1px solid #dcdcdc"></div>
<div class="r" style="left:1679px;top:772px;width:15px;height:352px;background:#f1f1f1"></div>
<div class="r" style="left:1680px;top:788.6px;width:13px;height:248px;background:#c1c1c1"></div>
<div class="arr" style="left:1682.5px;top:778px;border-width:0 4px 4px 4px;border-color:transparent transparent #a3a3a3 transparent"></div>
<div class="arr" style="left:1682.5px;top:1112px;border-top-color:#505050"></div>
<div id="t128" class="t" style="transform:scaleX(0.9700);left:1431.30px;top:777.39px;font-size:11px;color:#2a6580;">#Survey</div>
<div id="t129" class="t" style="transform:scaleX(0.9700);left:1431.00px;top:791.09px;font-size:11px;color:#888;">Demo User — 4 months ago</div>
<div id="t130" class="t" style="transform:scaleX(0.9550);left:1431.00px;top:806.29px;font-size:11px;color:#222;"><b style="color:#2a6580">@User 1</b> Please increase the quota on Part time</div>
<div id="t131" class="t" style="transform:scaleX(0.9700);left:1431.00px;top:819.59px;font-size:11px;color:#222;">works to 20N. Thanks!</div>
<div class="cb" style="left:1431px;top:837.9px;width:13px;height:12.5px"></div>
<div id="t132" class="t" style="transform:scaleX(0.9700);left:1450.20px;top:840.19px;font-size:11px;color:#888;">Resolved?</div>
<div id="t133" class="t" style="transform:scaleX(0.9700);transform-origin:100% 0;right:47.80px;top:840.19px;font-size:11px;color:#888;">Mark unread</div>
<div id="t134" class="t" style="transform:scaleX(0.9700);left:1431.30px;top:866.79px;font-size:11px;color:#2a6580;">#Q2</div>
<div id="t135" class="t" style="transform:scaleX(0.9700);left:1431.00px;top:880.49px;font-size:11px;color:#888;">User 1 — 4 months ago</div>
<div id="t136" class="t" style="transform:scaleX(0.9550);left:1431.00px;top:895.69px;font-size:11px;color:#222;"><b style="color:#2a6580">@Demo User</b> Yes, thanks for bringing that up. I've</div>
<div id="t137" class="t" style="transform:scaleX(0.9700);left:1431.00px;top:908.99px;font-size:11px;color:#222;">added Part-time to the choices</div>
<div class="cb" style="left:1431px;top:927.3px;width:13px;height:12.5px"></div>
<div id="t138" class="t" style="transform:scaleX(0.9700);left:1450.20px;top:929.59px;font-size:11px;color:#888;">Resolved?</div>
<div id="t139" class="t" style="transform:scaleX(0.9700);transform-origin:100% 0;right:47.80px;top:929.59px;font-size:11px;color:#888;">Mark read</div>
<div class="r" style="left:1423px;top:879.0px;width:2px;height:67.3px;background:#e8112d"></div>
<div id="t140" class="t" style="transform:scaleX(0.9700);left:1431.30px;top:956.99px;font-size:11px;color:#2a6580;">#Q1</div>
<div id="t141" class="t" style="transform:scaleX(0.9700);left:1431.00px;top:970.69px;font-size:11px;color:#888;">Demo User — 4 months ago</div>
<div id="t142" class="t" style="transform:scaleX(0.9550);left:1431.00px;top:985.89px;font-size:11px;color:#222;"><b style="color:#2a6580">@Cobey Cross</b> Please set up a quota for the 65+</div>
<div id="t143" class="t" style="transform:scaleX(0.9700);left:1431.00px;top:999.19px;font-size:11px;color:#222;">group capped at 50N</div>
<div class="cb" style="left:1431px;top:1017.5px;width:13px;height:12.5px"></div>
<div id="t144" class="t" style="transform:scaleX(0.9700);left:1450.20px;top:1019.79px;font-size:11px;color:#888;">Resolved?</div>
<div id="t145" class="t" style="transform:scaleX(0.9700);transform-origin:100% 0;right:47.80px;top:1019.79px;font-size:11px;color:#888;">Mark unread</div>
<div id="t146" class="t" style="transform:scaleX(0.9700);left:1431.30px;top:1047.89px;font-size:11px;color:#2a6580;">#Q2</div>
<div id="t147" class="t" style="transform:scaleX(0.9700);left:1431.00px;top:1061.59px;font-size:11px;color:#888;">Demo User — 4 months ago</div>
<div id="t148" class="t" style="transform:scaleX(0.9550);left:1431.00px;top:1076.79px;font-size:11px;color:#222;"><b style="color:#2a6580">@User 1</b> Did the client want to capture part-time</div>
<div id="t149" class="t" style="transform:scaleX(0.9700);left:1431.00px;top:1090.09px;font-size:11px;color:#222;">workers as well?</div>
<div class="cb" style="left:1431px;top:1108.4px;width:13px;height:12.5px"></div>
<svg class="abs" style="left:1432px;top:1107.4px" width="13" height="13" viewBox="0 0 13 13"><path d="M2 6.5 L5 9.5 L11.5 2" fill="none" stroke="#777" stroke-width="2"/></svg>
<div id="t150" class="t" style="transform:scaleX(0.9700);left:1450.20px;top:1110.69px;font-size:11px;color:#888;">Resolved?</div>
<div id="t151" class="t" style="transform:scaleX(0.9700);transform-origin:100% 0;right:47.80px;top:1110.69px;font-size:11px;color:#888;">Mark unread</div>
<div class="abs" style="left:1423px;top:1136.5px;width:272px;height:35.5px;background:#f2f2f2;box-shadow:0 1px 5px rgba(0,0,0,.3)"></div>
<div id="t152" class="t" style="transform:scaleX(0.9004);left:1433.40px;top:1146.85px;font-size:14px;color:#111;font-weight:bold">Survey comments</div>
<div class="r" style="left:1659px;top:1150.6px;width:18px;height:4.4px;background:#666"></div>
<div class="abs" style="left:1277px;top:1177px;width:423px;height:78px;background:rgba(0,0,0,.35);border-radius:26px 0 0 0"></div>
<div id="t153" class="t" style="transform:scaleX(0.9270);left:1300.50px;top:1208.56px;font-size:16px;color:#fff;font-style:italic;font-weight:bold">SAVED</div>
<div class="tb" style="left:1375px;top:1196.3px"></div>
<div class="tb" style="left:1426px;top:1196.3px"></div>
<div class="tb" style="left:1477.5px;top:1196.3px"></div>
<div class="tb" style="left:1528.3px;top:1196.3px"></div>
<div class="tb" style="left:1579px;top:1196.3px"></div>
<svg class="abs" style="left:1382px;top:1204px" width="27" height="25" viewBox="0 0 27 25"><path d="M0 8.2 H14.5 V0.6 L26 12.4 L14.5 24.4 V16.4 H0 Z" fill="#000"/></svg>
<svg class="abs" style="left:1433.3px;top:1204px" width="25.5" height="25" viewBox="8 8 496 496" preserveAspectRatio="none"><path d="M255.545 8c-66.269.119-126.438 26.233-170.86 68.685L48.971 40.971C33.851 25.851 8 36.559 8 57.941V192c0 13.255 10.745 24 24 24h134.059c21.382 0 32.09-25.851 16.971-40.971l-41.75-41.750c30.864-28.899 70.801-44.907 113.239-45.273 92.415-.798 170.17 73.991 169.371 169.348C423.129 348.574 348.504 424 256 424c-40.550 0-78.873-14.472-109.044-40.978-4.743-4.167-11.905-3.913-16.368.549L90.971 423.190c-4.869 4.869-4.628 12.813.46 17.454C134.965 480.268 192.788 504 256 504c136.967 0 247.999-111.033 248-247.998C504.001 119.193 392.354 7.755 255.545 8z" fill="#777"/></svg>
<svg class="abs" style="left:1484.3px;top:1204px" width="25.5" height="25" viewBox="8 8 496 496" preserveAspectRatio="none"><g transform="translate(512 0) scale(-1 1)"><path d="M255.545 8c-66.269.119-126.438 26.233-170.86 68.685L48.971 40.971C33.851 25.851 8 36.559 8 57.941V192c0 13.255 10.745 24 24 24h134.059c21.382 0 32.09-25.851 16.971-40.971l-41.75-41.750c30.864-28.899 70.801-44.907 113.239-45.273 92.415-.798 170.17 73.991 169.371 169.348C423.129 348.574 348.504 424 256 424c-40.550 0-78.873-14.472-109.044-40.978-4.743-4.167-11.905-3.913-16.368.549L90.971 423.190c-4.869 4.869-4.628 12.813.46 17.454C134.965 480.268 192.788 504 256 504c136.967 0 247.999-111.033 248-247.998C504.001 119.193 392.354 7.755 255.545 8z" fill="#777"/></g></svg>
<svg class="abs" style="left:1536px;top:1203px" width="30" height="30" viewBox="0 0 30 30"><rect x="5.5" y="2" width="3" height="21" fill="#000"/><path d="M2 20.5 H12 L7 26.5 Z" fill="#000"/></svg>
<div id="t154" class="t" style="left:1551.00px;top:1205.22px;font-size:12.5px;color:#000;font-weight:bold">1</div>
<div id="t155" class="t" style="left:1550.50px;top:1218.92px;font-size:12.5px;color:#000;font-weight:bold">9</div>
<svg class="abs" style="left:1580px;top:1200px" width="40" height="35" viewBox="0 0 40 35"><g fill="#000"><rect x="7" y="6" width="5" height="21"/><rect x="13" y="6" width="5" height="21"/><rect x="0" y="0" width="5" height="20.5" transform="translate(19.3 9.2) rotate(-27)"/></g><g fill="#eee"><rect x="8" y="7.6" width="3" height="1.2"/><rect x="8" y="24.3" width="3" height="1.2"/><rect x="14" y="7.6" width="3" height="1.2"/><rect x="14" y="24.3" width="3" height="1.2"/><g transform="translate(19.3 9.2) rotate(-27)"><rect x="1" y="1.6" width="3" height="1.2"/><rect x="1" y="17.8" width="3" height="1.2"/></g></g></svg>
<div class="abs" style="left:1630px;top:1184.6px;width:63.5px;height:63.5px;border-radius:50%;background:#66c96a;box-shadow:1px 2px 4px rgba(0,0,0,.35)"></div>
<div class="r" style="left:1642px;top:1212.5px;width:40px;height:7px;background:#fff"></div>
<div class="r" style="left:1658.5px;top:1196px;width:7px;height:40px;background:#fff"></div>
<div class="r" style="left:1700px;top:0px;width:17px;height:1255px;background:#f1f1f1"></div>
<div class="r" style="left:1702px;top:17px;width:13px;height:227px;background:#c1c1c1"></div>
<div class="arr" style="left:1704.5px;top:6px;border-width:0 4px 4px 4px;border-color:transparent transparent #a3a3a3 transparent"></div>
<div class="arr" style="left:1704.5px;top:1244px;border-top-color:#505050"></div>
<div class="badge" style="left:723.5px;top:111px">1</div>
<div class="badge" style="left:5.8px;top:185px">2</div>
<div class="badge" style="left:287.4px;top:251px">3</div>
<div class="badge" style="left:1307.8px;top:1159px">4</div>
<div class="badge" style="left:1390.8px;top:1120px">5</div>
<div class="badge" style="left:1393px;top:563px">6</div>
<div class="badge" style="left:1626.6px;top:270px">7</div>
<div class="badge" style="left:1658px;top:83px">8</div></body></html>
